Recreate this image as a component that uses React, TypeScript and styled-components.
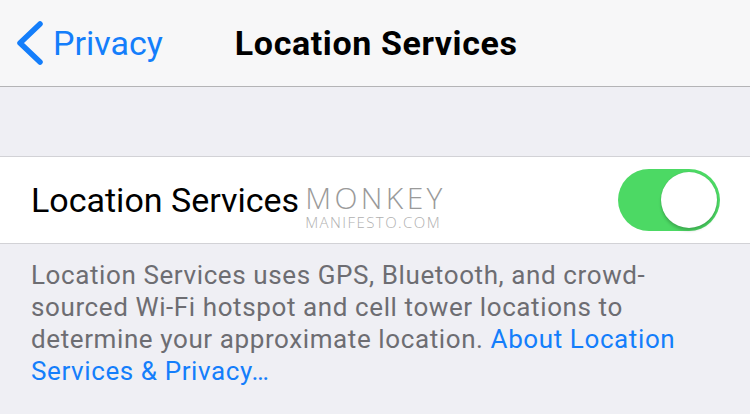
import React from "react";
import styled, { createGlobalStyle } from "styled-components";

const Global = createGlobalStyle`
  html, body { margin: 0; padding: 0; background: #efeff4; }
  body { width: 750px; height: 414px; overflow: hidden; font-family: Roboto, "Liberation Sans", sans-serif; }
`;

const Page = styled.div`
  width: 750px;
  height: 414px;
  background: #efeff4;
  display: flex;
  flex-direction: column;
`;

const NavBar = styled.header`
  height: 86px;
  background: #f7f7f8;
  border-bottom: 1px solid #b4b4b6;
  display: flex;
  align-items: center;
  flex-shrink: 0;
`;

const Back = styled.div`
  display: flex;
  align-items: center;
  gap: 9px;
  padding-left: 16px;
  color: #147efb;
  font-size: 34px;
`;

const Title = styled.div`
  margin-left: 72px;
  font-size: 34px;
  font-weight: 700;
  letter-spacing: 0.6px;
  color: #000;
`;

const Spacer = styled.div`
  height: 69px;
  flex-shrink: 0;
`;

const Row = styled.div`
  height: 86px;
  background: #fff;
  border-top: 1px solid #d2d2d6;
  border-bottom: 1px solid #d2d2d6;
  display: flex;
  align-items: center;
  padding: 0 30px 0 31px;
  flex-shrink: 0;
`;

const Label = styled.div`
  font-size: 34px;
  color: #000;
`;

const Watermark = styled.div`
  display: flex;
  flex-direction: column;
  align-items: flex-start;
  margin-left: 6px;
  margin-top: 13px;
  font-family: "Open Sans", "Liberation Sans", sans-serif;
  font-weight: 300;
  line-height: 1;
`;

const WmBig = styled.span`
  font-size: 30px;
  color: #9a9a9a;
  letter-spacing: 3.4px;
`;

const WmSmall = styled.span`
  font-size: 15px;
  color: #b0b0b0;
  letter-spacing: 1.45px;
  margin-top: 2px;
`;

const Switch = styled.div`
  margin-left: auto;
  width: 102px;
  height: 62px;
  border-radius: 31px;
  background: #4cd964;
  position: relative;
`;

const Knob = styled.div`
  position: absolute;
  right: 3px;
  top: 3px;
  width: 56px;
  height: 56px;
  border-radius: 50%;
  background: #fff;
  box-shadow: 0 3px 3px rgba(0, 0, 0, 0.18), 0 0 1px rgba(0, 0, 0, 0.2);
`;

const Footer = styled.p`
  margin: 0;
  padding: 15px 40px 0 31px;
  font-size: 26px;
  line-height: 32px;
  letter-spacing: 0.6px;
  color: #6d6d72;
`;

const Link = styled.span`
  color: #147efb;
`;

export default function App() {
  return (
    <Page>
      <Global />
      <NavBar>
        <Back>
          <svg width="28" height="44" viewBox="0 0 28 44">
            <path d="M24 3 L4 22 L24 41" fill="none" stroke="#147efb" strokeWidth="5.5" strokeLinecap="round" strokeLinejoin="round" />
          </svg>
          <span>Privacy</span>
        </Back>
        <Title>Location Services</Title>
      </NavBar>
      <Spacer />
      <Row>
        <Label>Location Services</Label>
        <Watermark>
          <WmBig>MONKEY</WmBig>
          <WmSmall>MANIFESTO.COM</WmSmall>
        </Watermark>
        <Switch>
          <Knob />
        </Switch>
      </Row>
      <Footer>
        Location Services uses GPS, Bluetooth, and crowd-sourced Wi-Fi hotspot and cell tower locations to determine your approximate location. <Link>About Location Services &amp; Privacy…</Link>
      </Footer>
    </Page>
  );
}
